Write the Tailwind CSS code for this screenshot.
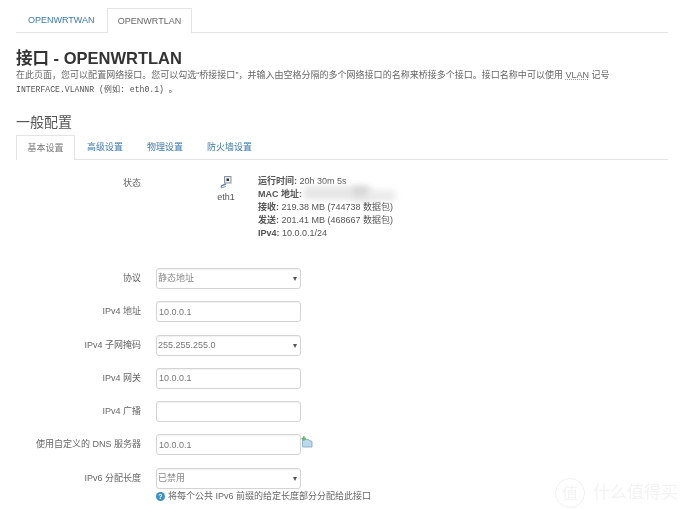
<!DOCTYPE html>
<html lang="zh-CN">
<head>
  <meta charset="UTF-8" />
  <title>接口 - OPENWRTLAN</title>
  <script src="https://cdn.jsdelivr.net/npm/@tailwindcss/browser@4"></script>
</head>
<body class="bg-white">
  <div class="relative w-[680px] h-[509px] overflow-hidden blur-[0.3px] font-['Liberation_Sans','Noto_Sans_CJK_SC',sans-serif] text-[9px] leading-[13px] text-[#666]">
    <div class="pl-4 pt-2 w-[668px]">

      <!-- 接口标签 -->
      <ul class="flex h-[25px] border-b border-[#e4e4e4] text-[9px]">
        <li class="w-[91px] pl-[12px] flex items-center text-[#3d78a8]">OPENWRTWAN</li>
        <li class="w-[85px] h-[25px] flex items-center justify-center border border-b-0 border-[#e4e4e4] bg-white text-[#666]">OPENWRTLAN</li>
      </ul>

      <h2 class="mt-[15px] text-[16.5px] leading-[20px] font-bold text-[#333]">接口 - OPENWRTLAN</h2>
      <p class="mt-[1px] text-[9.03px] text-[#666]">在此页面，您可以配置网络接口。您可以勾选“桥接接口”，并输入由空格分隔的多个网络接口的名称来桥接多个接口。接口名称中可以使用 <span class="underline decoration-dotted decoration-[#999]">VLAN</span> 记号</p>
      <p class="mt-[1px] font-['Liberation_Mono','Noto_Sans_CJK_SC',monospace] text-[8.15px] text-[#555]">INTERFACE.VLANNR (例如: eth0.1) 。</p>

      <h3 class="mt-[16px] text-[14px] leading-[20px] text-[#555]">一般配置</h3>

      <!-- 配置标签 -->
      <ul class="flex mt-[3px] h-[25px] border-b border-[#e4e4e4]">
        <li class="w-[59px] h-[25px] flex items-center justify-center border border-b-0 border-[#e4e4e4] bg-white text-[#777]">基本设置</li>
        <li class="w-[60px] pl-[12px] flex items-center text-[#3d78a8]">高级设置</li>
        <li class="w-[60px] pl-[12px] flex items-center text-[#3d78a8]">物理设置</li>
        <li class="pl-[12px] flex items-center text-[#3d78a8]">防火墙设置</li>
      </ul>

      <!-- 状态 -->
      <div class="flex mt-[15px] h-[90px]">
        <div class="w-[125px] pt-[2px] text-right">状态</div>
        <div class="ml-[60px] w-[50px] flex flex-col items-center text-[#555]">
          <svg class="w-[12px] h-[13px] mt-[1px]" viewBox="0 0 12 13">
            <rect x="4.5" y="0.5" width="6.5" height="6.5" fill="#e8eaee" stroke="#8b93a0" />
            <rect x="6.5" y="2.5" width="2.5" height="2.5" fill="#333" />
            <path d="M6 8 L2 9.5 L1 11.5" fill="none" stroke="#5a86b8" stroke-width="1.5" />
            <path d="M1 12 L6 10.5" fill="none" stroke="#9aa5b4" stroke-width="1.2" />
          </svg>
          <span class="mt-[2px]">eth1</span>
        </div>
        <div class="ml-[7px] text-[#555]">
          <div><b>运行时间:</b> 20h 30m 5s</div>
          <div class="relative"><b>MAC 地址:</b>
            <span class="absolute left-[45px] top-[-2px] w-[70px] h-[14px] rounded-[6px] bg-[#e6e6e6] blur-[3px]"></span>
            <span class="absolute left-[95px] top-[2px] w-[42px] h-[12px] bg-[#ebebeb] blur-[3px]"></span>
            <span class="absolute left-[95px] top-[-1px] w-[14px] h-[9px] bg-[#d6d6d6] blur-[3px]"></span>
          </div>
          <div class="relative"><b>接收:</b> 219.38 MB (744738 数据包)</div>
          <div><b>发送:</b> 201.41 MB (468667 数据包)</div>
          <div><b>IPv4:</b> 10.0.0.1/24</div>
        </div>
      </div>

      <!-- 表单 -->
      <div class="mt-[3px] flex flex-col gap-[12.25px]">
        <div class="flex items-center h-[21px]">
          <label class="w-[125px] text-right">协议</label>
          <div class="relative ml-[15px] w-[145px] h-[21px]">
            <select class="w-full h-full appearance-none border border-[#d4d4d4] rounded-[3px] bg-white px-[1px] text-[9px] text-[#888] shadow-[inset_0_1px_1px_rgba(0,0,0,0.06)]"><option>静态地址</option></select>
            <span class="absolute right-[4px] top-[4px] text-[8px] text-[#555]">▾</span>
          </div>
        </div>
        <div class="flex items-center h-[21px]">
          <label class="w-[125px] text-right">IPv4 地址</label>
          <input class="ml-[15px] w-[145px] h-[21px] border border-[#d4d4d4] rounded-[3px] px-[2px] text-[9px] text-[#777] shadow-[inset_0_1px_1px_rgba(0,0,0,0.06)]" value="10.0.0.1" />
        </div>
        <div class="flex items-center h-[21px]">
          <label class="w-[125px] text-right">IPv4 子网掩码</label>
          <div class="relative ml-[15px] w-[145px] h-[21px]">
            <select class="w-full h-full appearance-none border border-[#d4d4d4] rounded-[3px] bg-white px-[1px] text-[9px] text-[#777] shadow-[inset_0_1px_1px_rgba(0,0,0,0.06)]"><option>255.255.255.0</option></select>
            <span class="absolute right-[4px] top-[4px] text-[8px] text-[#555]">▾</span>
          </div>
        </div>
        <div class="flex items-center h-[21px]">
          <label class="w-[125px] text-right">IPv4 网关</label>
          <input class="ml-[15px] w-[145px] h-[21px] border border-[#d4d4d4] rounded-[3px] px-[2px] text-[9px] text-[#777] shadow-[inset_0_1px_1px_rgba(0,0,0,0.06)]" value="10.0.0.1" />
        </div>
        <div class="flex items-center h-[21px]">
          <label class="w-[125px] text-right">IPv4 广播</label>
          <input class="ml-[15px] w-[145px] h-[21px] border border-[#d4d4d4] rounded-[3px] px-[2px] text-[9px] text-[#777] shadow-[inset_0_1px_1px_rgba(0,0,0,0.06)]" />
        </div>
        <div class="flex items-center h-[21px]">
          <label class="w-[125px] text-right">使用自定义的 DNS 服务器</label>
          <input class="ml-[15px] w-[145px] h-[21px] border border-[#d4d4d4] rounded-[3px] px-[2px] text-[9px] text-[#777] shadow-[inset_0_1px_1px_rgba(0,0,0,0.06)]" value="10.0.0.1" />
          <svg class="w-[12px] h-[12px] mb-[6px]" viewBox="0 0 12 12">
            <path d="M1.5 3.5 H7 L11 5.5 V11 H1.5 Z" fill="#bcd8ea" stroke="#7fa3bd" stroke-width="0.8" />
            <path d="M0.5 2.5 H5 M2.8 0.3 V4.7" stroke="#5cb85c" stroke-width="1.5" />
          </svg>
        </div>
        <div class="flex items-center h-[21px]">
          <label class="w-[125px] text-right">IPv6 分配长度</label>
          <div class="relative ml-[15px] w-[145px] h-[21px]">
            <select class="w-full h-full appearance-none border border-[#d4d4d4] rounded-[3px] bg-white px-[1px] text-[9px] text-[#888] shadow-[inset_0_1px_1px_rgba(0,0,0,0.06)]"><option>已禁用</option></select>
            <span class="absolute right-[4px] top-[4px] text-[8px] text-[#555]">▾</span>
          </div>
        </div>
      </div>
      <div class="flex items-center ml-[140px] mt-[1px] text-[#666]">
        <svg class="w-[9px] h-[9px] mr-[3px]" viewBox="0 0 9 9">
          <circle cx="4.5" cy="4.5" r="4.5" fill="#3f8fc6" />
          <text x="4.5" y="7.2" text-anchor="middle" font-size="7" font-weight="bold" fill="#fff">?</text>
        </svg>
        将每个公共 IPv6 前缀的给定长度部分分配给此接口
      </div>
    </div>

    <!-- 水印 -->
    <div class="absolute right-[2px] top-[478px] flex items-center gap-[8px] text-[#f3f3f3]">
      <span class="w-[30px] h-[30px] rounded-full border border-[#f0f0f0] flex items-center justify-center text-[16px]">值</span>
      <span class="text-[17px] leading-[20px]">什么值得买</span>
    </div>
  </div>
</body>
</html>
